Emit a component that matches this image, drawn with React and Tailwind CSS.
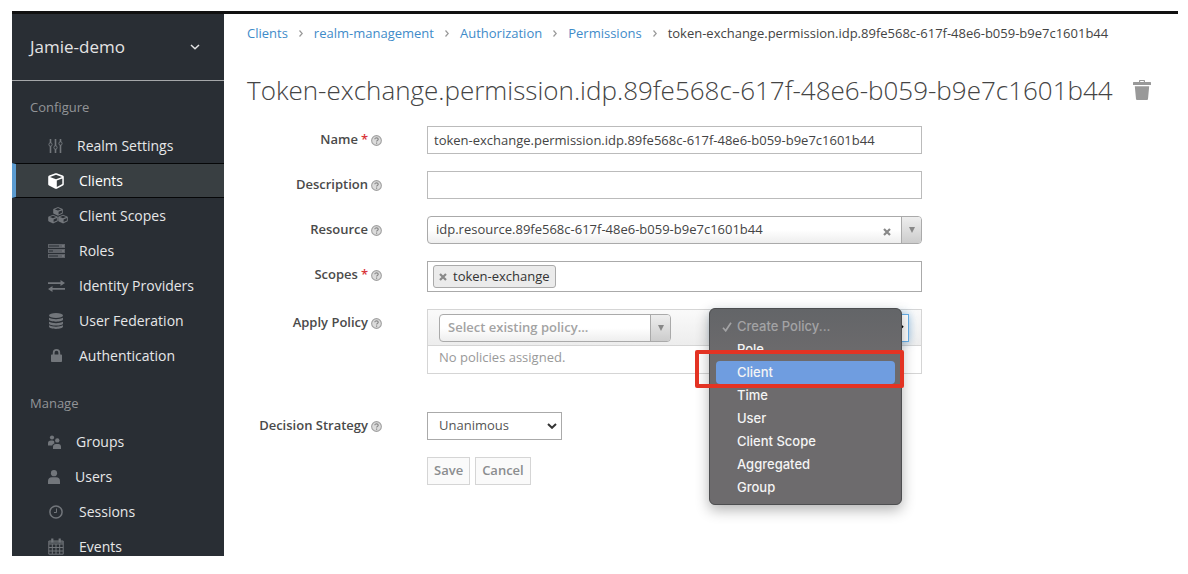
import React from "react";

const paint = { fill: "currentColor", "aria-hidden": true };

function SlidersIcon() {
  return (
    <svg viewBox="0 0 15 14" className="h-[14px] w-[15px]" fill="none" stroke="currentColor" strokeWidth="1" aria-hidden="true">
      <path d="M2.5 0v4M2.5 7v7M7.5 0v7M7.5 10v4M12.5 0v3M12.5 6v8" strokeWidth="1.6" />
      <ellipse cx="2.5" cy="5.5" rx="1.6" ry="1.7" />
      <ellipse cx="7.5" cy="8.5" rx="1.6" ry="1.7" />
      <ellipse cx="12.5" cy="4.5" rx="1.6" ry="1.7" />
    </svg>
  );
}

function CubeIcon() {
  return (
    <svg {...paint} viewBox="0 0 16 16" className="size-4">
      <path fillRule="evenodd" d="M7.4.3a1.6 1.6 0 0 1 1.2 0l6.2 2.2c.6.2 1 .8 1 1.4v7.3c0 .6-.3 1.1-.8 1.4l-6.2 3.2c-.5.2-1 .2-1.5 0L1 12.6c-.5-.3-.8-.8-.8-1.4V3.9c0-.6.4-1.2 1-1.4zM8 1.7 2 3.9 8 6.2 14 3.9zM8.8 7.5v6.4l5.5-2.8V5.4z" />
    </svg>
  );
}

function CubesIcon() {
  const cube = "M4.4.2a1 1 0 0 1 .9 0l3.700 1.500c.4.2.6.5.6.9v3.300c0 .4-.2.7-.5.9L5.300 8.600a1 1 0 0 1-.9 0L.6 6.800C.2 6.600 0 6.300 0 5.900V2.600c0-.4.2-.7.6-.9zM4.800 1.100 1.700 2.400 4.800 3.600 7.900 2.400zM5.400 4.700v2.700L8.700 5.800V3.400z";
  return (
    <svg {...paint} viewBox="0 0 20 17" className="h-[17px] w-5">
      <path fillRule="evenodd" d={cube} transform="translate(5.200 0)" />
      <path fillRule="evenodd" d={cube} transform="translate(.2 7.700)" />
      <path fillRule="evenodd" d={cube} transform="translate(10.200 7.700)" />
    </svg>
  );
}

function ServerIcon() {
  return (
    <svg {...paint} viewBox="0 0 17 14" className="h-[14px] w-[17px]">
      <path d="M0 0h17v4H0zM0 5h17v4H0zM0 10h17v4H0z" opacity=".75" />
      <path d="M1 1.500h10v1H1zM1 6.500h4v1H1zM1 11.500h9v1H1z" fill="#292e34" />
      <path d="M14 1.500h2v1h-2zM14 6.500h2v1h-2zM14 11.500h2v1h-2z" fill="#85888c" />
    </svg>
  );
}

function ExchangeIcon() {
  return (
    <svg {...paint} viewBox="0 0 17 12" className="h-3 w-[17px]">
      <path d="M0 2.300h12.500V0L17 3.100l-4.500 3V4H0zM17 8H4.500V5.900L0 9l4.500 3V9.700H17z" />
    </svg>
  );
}

function DatabaseIcon() {
  return (
    <svg {...paint} viewBox="0 0 14 16" className="h-4 w-[14px]">
      <ellipse cx="7" cy="2.500" rx="7" ry="2.500" />
      <path d="M0 4.800c3 1.900 11 1.900 14 0v1.800C14 9.300 0 9.300 0 6.600zM0 8.800c3 1.900 11 1.900 14 0v1.700c0 2.700-14 2.700-14 0zM0 12.300c3 1.900 11 1.900 14 0v1.200c0 3.200-14 3.200-14 0z" />
    </svg>
  );
}

function LockIcon() {
  return (
    <svg {...paint} viewBox="0 0 11 13" className="h-[13px] w-[11px]">
      <path fillRule="evenodd" d="M1.800 5.500V3.700a3.700 3.700 0 0 1 7.400 0v1.800h1c.5 0 .8.3.8.8v5.900c0 .5-.3.800-.8.800H.8c-.5 0-.8-.3-.8-.800V6.300c0-.5.3-.8.800-.8zm1.800 0h3.800V3.700a1.900 1.900 0 0 0-3.800 0z" />
    </svg>
  );
}

function GroupIcon() {
  return (
    <svg {...paint} viewBox="0 0 13 14" className="h-[14px] w-[13px]">
      <circle cx="4" cy="2.500" r="2.100" />
      <circle cx="9.300" cy="5.400" r="2.200" />
      <path d="M0 10.500V8.200C0 6.500 1 5.500 3 5.500h1.500c.8 0 1.200.2 1.700.7-.2 1 .1 1.500.4 2-1.300.5-2.100 1.200-2.400 2.300zM5 14v-2.200c0-1.900 1.200-2.900 3-2.900h2.300c1.800 0 2.700 1 2.700 2.900V14z" />
    </svg>
  );
}

function UserIcon() {
  return (
    <svg {...paint} viewBox="0 0 12 14" className="h-[14px] w-3">
      <circle cx="6" cy="3.200" r="3.100" />
      <path d="M0 14v-2.800C0 8.700 1.500 7.200 3.800 7.200h4.400c2.300 0 3.800 1.500 3.800 4V14z" />
    </svg>
  );
}

function ClockIcon() {
  return (
    <svg viewBox="0 0 14 14" className="size-[14px]" fill="none" stroke="currentColor" aria-hidden="true">
      <circle cx="7" cy="7" r="6.100" strokeWidth="1.500" />
      <path d="M7.500 3.500v4H5" strokeWidth="1" />
    </svg>
  );
}

function CalendarIcon() {
  return (
    <svg viewBox="0 0 16 17" className="h-[17px] w-4" fill="none" stroke="currentColor" aria-hidden="true">
      <path d="M.8 3h14.400v13.200H.8zM.8 6h14.400M.8 9.500h14.400M.8 13h14.400M4.300 6v10M8 6v10M11.700 6v10" strokeWidth="1" />
      <path d="M4.300.5v4M11.700.5v4" strokeWidth="2.200" />
      <path d="M1 4.300h14" strokeWidth="2" opacity=".6" />
    </svg>
  );
}

function TrashIcon() {
  return (
    <svg {...paint} viewBox="0 0 18 20" className="h-5 w-[18px]">
      <path fillRule="evenodd" d="M6 2V1c0-.6.400-1 1-1h4c.6 0 1 .4 1 1v1h5.500l.5.600V5H0V2.600L.500 2zm1.200 0h3.600v-.9H7.200zM1.800 6.200h14.400L15 19c-.1.600-.4 1-1 1H4c-.6 0-.9-.4-1-1z" />
    </svg>
  );
}

function HelpIcon() {
  return (
    <svg viewBox="0 0 12 12" className="size-[11px] shrink-0" aria-hidden="true">
      <circle cx="6" cy="6" r="5.300" fill="#dcdcdc" stroke="#a0a0a0" strokeWidth="1.200" />
      <path d="M4.200 4.700c0-2.300 3.700-2.100 3.700 0 0 1.200-1.800 1.200-1.800 2.400M6.100 8.200v1.300" fill="none" stroke="#888" strokeWidth="1.300" />
    </svg>
  );
}

function Chevron({ className }) {
  return (
    <svg viewBox="0 0 10 6" className={className} fill="none" stroke="currentColor" aria-hidden="true">
      <path d="m1 1 4 3.800L9 1" />
    </svg>
  );
}

function Cross() {
  return (
    <svg viewBox="0 0 8 8" className="size-2" fill="none" stroke="#888" strokeWidth="2.200" aria-hidden="true">
      <path d="m1 1 6 6M7 1 1 7" />
    </svg>
  );
}

function ArrowBox() {
  return (
    <span className="pointer-events-none flex w-5 items-center justify-center self-stretch rounded-r-[3px] border-l border-[#aaa] bg-linear-to-t from-[#ccc] to-[#eee]">
      <svg viewBox="0 0 6 6" className="size-[6px]" fill="#888" aria-hidden="true">
        <path d="M0 0h6L3 6z" />
      </svg>
    </span>
  );
}

const configure = [
  { label: "Realm Settings", icon: SlidersIcon, box: "w-[14px]" },
  { label: "Clients", icon: CubeIcon, box: "w-4", active: true },
  { label: "Client Scopes", icon: CubesIcon, box: "w-4" },
  { label: "Roles", icon: ServerIcon, box: "w-4" },
  { label: "Identity Providers", icon: ExchangeIcon, box: "w-4" },
  { label: "User Federation", icon: DatabaseIcon, box: "w-4 justify-center" },
  { label: "Authentication", icon: LockIcon, box: "w-4 justify-center" },
];

const manage = [
  { label: "Groups", icon: GroupIcon, box: "w-[13px]" },
  { label: "Users", icon: UserIcon, box: "w-3" },
  { label: "Sessions", icon: ClockIcon, box: "w-4 justify-center" },
  { label: "Events", icon: CalendarIcon, box: "w-4" },
];

function NavList({ items }) {
  return (
    <ul>
      {items.map(({ label, icon: Icon, box, active }) => (
        <li key={label}>
          <a
            href="#"
            aria-current={active ? "page" : undefined}
            className={
              "flex h-[35px] items-center gap-[15px] border-y border-l-4 pl-8 text-sm font-medium " +
              (active
                ? "border-y-[#060708] border-l-[#5b9bd0] bg-[#393f42] text-white"
                : "border-transparent text-[#e6e7e8]")
            }
          >
            <span className={"flex shrink-0 " + box + (active ? " text-white" : " text-[#72767b]")}>
              <span className="shrink-0">
                <Icon />
              </span>
            </span>
            {label}
          </a>
        </li>
      ))}
    </ul>
  );
}

function Row({ id, label, required, children, className = "" }) {
  return (
    <div className={"flex items-start gap-[45px] " + className}>
      <label htmlFor={id} className="flex h-7 w-[135px] shrink-0 items-center justify-end gap-[3px] text-[13px] font-semibold whitespace-nowrap text-[#4a4a4a]">
        {label}
        {required && <span className="text-[#d9363b]">*</span>}
        <HelpIcon />
      </label>
      <div className="min-w-0 max-w-[495px] flex-1">{children}</div>
    </div>
  );
}

const field = "h-7 w-full border border-[#bbb] bg-white px-[6px] text-[13px] text-[#444] outline-none";
const choice = "flex h-7 items-center rounded border border-[#aaa] bg-linear-to-t from-[#eee] to-white to-50%";

const policies = ["Role", "Client", "Time", "User", "Client Scope", "Aggregated", "Group"];

function PolicyMenu() {
  return (
    <ul
      role="listbox"
      aria-label="Create Policy"
      className="absolute -top-[2px] right-[19px] z-10 w-[193px] rounded-md border border-[#4d4e50] bg-[#6d6b6d] bg-linear-to-b from-[#636568] to-[#6d6b6d] to-25% px-[6px] pt-[6px] pb-[5px] font-['Inter',sans-serif] text-[13px] font-medium text-[#f4f4f4] shadow-[0_5px_14px_rgba(0,0,0,0.3)]"
    >
      <li role="option" aria-selected="true" className="flex h-[23px] items-center gap-[5px] pl-[6px] text-[#a3a3a5]">
        <svg viewBox="0 0 10 10" className="size-[10px]" fill="none" stroke="currentColor" strokeWidth="1.700" aria-hidden="true">
          <path d="m1 5.800 2.700 3L9 .8" />
        </svg>
        Create Policy...
      </li>
      {policies.map((name) => (
        <li
          key={name}
          role="option"
          aria-selected="false"
          className={"flex h-[23px] items-center rounded pl-[21px]" + (name === "Client" ? " bg-[#6f9de0]" : "")}
        >
          {name}
        </li>
      ))}
    </ul>
  );
}

const crumbs = ["Clients", "realm-management", "Authorization", "Permissions"];
const permission = "oken-exchange.permission.idp.89fe568c-617f-48e6-b059-b9e7c1601b44";

export default function App() {
  return (
    <div className="flex h-screen flex-col bg-white pt-[11px] pr-[10px] pb-[18px] pl-3 font-['Open_Sans',sans-serif]">
      <div className="h-[3px] shrink-0 bg-[#111]" />
      <div className="flex min-h-0 flex-1">
        <nav className="w-[212px] shrink-0 overflow-hidden bg-[#292e34]">
          <button className="flex h-[67px] w-full items-center justify-between border-b border-[#a5a7a9] pr-6 pl-[18px] text-[17px] text-[#e4e4e5]">
            Jamie-demo
            <Chevron className="h-[6px] w-[10px] stroke-[1.5]" />
          </button>
          <h2 className="px-[18px] pt-4 pb-[11px] text-[13px] leading-5 text-[#929497]">Configure</h2>
          <NavList items={configure} />
          <h2 className="px-[18px] pt-5 pb-[11px] text-[13px] leading-5 text-[#929497]">Manage</h2>
          <NavList items={manage} />
        </nav>

        <main className="min-w-0 flex-1 pt-[9px] pl-[23px]">
          <ol className="flex items-center text-[13px] leading-5 whitespace-nowrap text-[#444]">
            {crumbs.map((c) => (
              <li key={c} className="flex items-center">
                <a href="#" className="text-[#3f8bc9]">
                  {c}
                </a>
                <svg viewBox="0 0 4 7" className="mx-[11px] h-[7px] w-1" fill="none" stroke="#999" strokeWidth="1.200" aria-hidden="true">
                  <path d="m.5.500 2.700 3-2.700 3" />
                </svg>
              </li>
            ))}
            <li>t{permission}</li>
          </ol>

          <div className="mt-[31px] flex items-center gap-5 whitespace-nowrap">
            <h1 className="text-[26px] leading-8 font-light text-[#444]">T{permission}</h1>
            <button aria-label="Delete permission" className="text-[#999]">
              <TrashIcon />
            </button>
          </div>

          <form className="mt-5 flex flex-col gap-[17px]" onSubmit={(e) => e.preventDefault()}>
            <Row id="name" label="Name" required>
              <input id="name" className={field} defaultValue={"t" + permission} />
            </Row>
            <Row id="description" label="Description">
              <input id="description" className={field} />
            </Row>
            <Row id="resource" label="Resource">
              <div className={choice}>
                <select id="resource" className="h-full min-w-0 flex-1 appearance-none bg-transparent pl-2 text-[13px] text-[#444] outline-none">
                  <option>idp.resource.89fe568c-617f-48e6-b059-b9e7c1601b44</option>
                </select>
                <button type="button" aria-label="Clear resource" className="px-[10px] pt-1">
                  <Cross />
                </button>
                <ArrowBox />
              </div>
            </Row>
            <Row id="scopes" label="Scopes" required>
              <div className="flex h-[31px] items-center gap-1 border border-[#aaa] px-[5px]">
                <span className="flex h-[23px] shrink-0 items-center gap-[6px] rounded-[3px] border border-[#aaa] bg-[#ebebeb] px-[5px] text-[13px] text-[#333]">
                  <button type="button" aria-label="Remove token-exchange">
                    <Cross />
                  </button>
                  token-exchange
                </span>
                <input id="scopes" className="h-full min-w-0 flex-1 text-[13px] outline-none" />
              </div>
            </Row>
            <Row id="policy" label="Apply Policy" className="h-[86px]">
              <div className="relative border border-[#d5d5d5] text-[13px] text-[#999]">
                <div className="flex h-9 items-center justify-between border-b border-[#d5d5d5] bg-linear-to-b from-[#fafafa] to-[#ededed] pr-3 pl-[11px]">
                  <div className={choice + " w-[232px]"}>
                    <select id="policy" className="h-full min-w-0 flex-1 appearance-none bg-transparent pl-2 font-semibold text-[#a3a3a3] outline-none">
                      <option>Select existing policy...</option>
                    </select>
                    <ArrowBox />
                  </div>
                  <div className="flex h-7 w-[196px] items-center border border-[#66afe9] bg-white pr-1 text-black shadow-[0_0_8px_rgba(102,175,233,0.6)]">
                    <select aria-label="Create Policy" className="h-full min-w-0 flex-1 appearance-none bg-transparent pl-2 outline-none">
                      <option>Create Policy...</option>
                    </select>
                    <Chevron className="h-[6px] w-[10px] stroke-2" />
                  </div>
                </div>
                <p className="px-[11px] pt-[1px] pb-[6px] leading-5">No policies assigned.</p>
                <PolicyMenu />
                <div className="pointer-events-none absolute top-[40px] right-[17px] z-20 h-[38px] w-[209px] rounded-[2px] border-4 border-[#e33323]" />
              </div>
            </Row>
            <Row id="strategy" label="Decision Strategy">
              <div className="flex h-7 w-[135px] items-center border border-[#aaa] pr-1 text-[#333]">
                <select id="strategy" className="h-full min-w-0 flex-1 appearance-none bg-transparent pl-[11px] text-[13px] text-[#555] outline-none">
                  <option>Unanimous</option>
                </select>
                <Chevron className="h-[6px] w-[10px] stroke-2" />
              </div>
            </Row>
            <div className="flex gap-[5px] pl-[180px] text-[13px] font-semibold text-[#8b8d8f]">
              <button className="h-7 border border-[#d5d5d5] bg-[#fafafa] px-[6px]">Save</button>
              <button type="button" className="h-7 border border-[#d5d5d5] bg-[#fafafa] px-[6px]">
                Cancel
              </button>
            </div>
          </form>
        </main>
      </div>
    </div>
  );
}
